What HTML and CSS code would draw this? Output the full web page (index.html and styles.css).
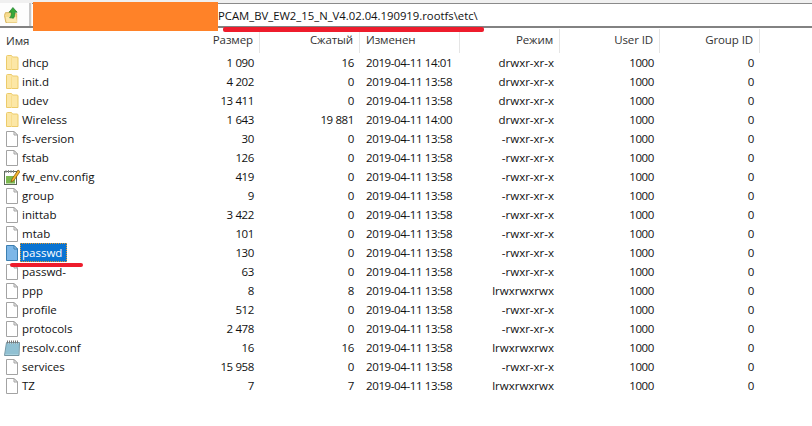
FILE: index.html
```html
<!DOCTYPE html>
<html lang="ru">
<head>
<meta charset="utf-8">
<title>etc</title>
<link rel="stylesheet" href="styles.css">
</head>
<body>
<div class="toolbar">
  <div class="up-btn">
    <svg width="15" height="16" viewBox="0 0 16 17"><path d="M.5 9l1-3h4v-1h2v2h6v9.500H2z" fill="#f6dc8e" stroke="#d6b25a"/><path d="M3 16.500l-1-6h11l1 6z" fill="#fbe9b0"/><path d="M9.500.5l4.500 5h-2.500c0 3 0 4.500-1.500 6.500-1.500-.5-3-.5-4-.5 1.500-1.500 2-3.500 2-6H5.500z" fill="#36a93a" stroke="#1c7a2a" stroke-width=".7"/></svg>
  </div>
  <div class="path-box"><span class="path-text">PCAM_BV_EW2_15_N_V4.02.04.190919.rootfs\etc\</span></div>
</div>
<div class="redact"></div>
<div class="mark mark-path"></div>
<div class="mark mark-file"></div>
<div class="head row">
  <div class="name">Имя</div><div class="num sep">Размер</div><div class="num sep">Сжатый</div><div class="date sep">Изменен</div><div class="num sep">Режим</div><div class="num sep">User ID</div><div class="num sep">Group ID</div>
</div>
<div class="list">
  <div class="row"><div class="name"><svg class="ico"><use href="#folder"/></svg><span class="label">dhcp</span></div><div class="num fig">1 090</div><div class="num fig">16</div><div class="date fig">2019-04-11 14:01</div><div class="num">drwxr-xr-x</div><div class="num fig">1000</div><div class="num fig">0</div></div>
  <div class="row"><div class="name"><svg class="ico"><use href="#folder"/></svg><span class="label">init.d</span></div><div class="num fig">4 202</div><div class="num fig">0</div><div class="date fig">2019-04-11 13:58</div><div class="num">drwxr-xr-x</div><div class="num fig">1000</div><div class="num fig">0</div></div>
  <div class="row"><div class="name"><svg class="ico"><use href="#folder"/></svg><span class="label">udev</span></div><div class="num fig">13 411</div><div class="num fig">0</div><div class="date fig">2019-04-11 13:58</div><div class="num">drwxr-xr-x</div><div class="num fig">1000</div><div class="num fig">0</div></div>
  <div class="row"><div class="name"><svg class="ico"><use href="#folder"/></svg><span class="label">Wireless</span></div><div class="num fig">1 643</div><div class="num fig">19 881</div><div class="date fig">2019-04-11 14:00</div><div class="num">drwxr-xr-x</div><div class="num fig">1000</div><div class="num fig">0</div></div>
  <div class="row"><div class="name"><svg class="ico"><use href="#file"/></svg><span class="label">fs-version</span></div><div class="num fig">30</div><div class="num fig">0</div><div class="date fig">2019-04-11 13:58</div><div class="num">-rwxr-xr-x</div><div class="num fig">1000</div><div class="num fig">0</div></div>
  <div class="row"><div class="name"><svg class="ico"><use href="#file"/></svg><span class="label">fstab</span></div><div class="num fig">126</div><div class="num fig">0</div><div class="date fig">2019-04-11 13:58</div><div class="num">-rwxr-xr-x</div><div class="num fig">1000</div><div class="num fig">0</div></div>
  <div class="row"><div class="name"><svg class="ico"><use href="#config"/></svg><span class="label">fw_env.config</span></div><div class="num fig">419</div><div class="num fig">0</div><div class="date fig">2019-04-11 13:58</div><div class="num">-rwxr-xr-x</div><div class="num fig">1000</div><div class="num fig">0</div></div>
  <div class="row"><div class="name"><svg class="ico"><use href="#file"/></svg><span class="label">group</span></div><div class="num fig">9</div><div class="num fig">0</div><div class="date fig">2019-04-11 13:58</div><div class="num">-rwxr-xr-x</div><div class="num fig">1000</div><div class="num fig">0</div></div>
  <div class="row"><div class="name"><svg class="ico"><use href="#file"/></svg><span class="label">inittab</span></div><div class="num fig">3 422</div><div class="num fig">0</div><div class="date fig">2019-04-11 13:58</div><div class="num">-rwxr-xr-x</div><div class="num fig">1000</div><div class="num fig">0</div></div>
  <div class="row"><div class="name"><svg class="ico"><use href="#file"/></svg><span class="label">mtab</span></div><div class="num fig">101</div><div class="num fig">0</div><div class="date fig">2019-04-11 13:58</div><div class="num">-rwxr-xr-x</div><div class="num fig">1000</div><div class="num fig">0</div></div>
  <div class="row"><div class="name"><svg class="ico"><use href="#file-sel"/></svg><span class="label selected">passwd</span></div><div class="num fig">130</div><div class="num fig">0</div><div class="date fig">2019-04-11 13:58</div><div class="num">-rwxr-xr-x</div><div class="num fig">1000</div><div class="num fig">0</div></div>
  <div class="row"><div class="name"><svg class="ico"><use href="#file"/></svg><span class="label">passwd-</span></div><div class="num fig">63</div><div class="num fig">0</div><div class="date fig">2019-04-11 13:58</div><div class="num">-rwxr-xr-x</div><div class="num fig">1000</div><div class="num fig">0</div></div>
  <div class="row"><div class="name"><svg class="ico"><use href="#file"/></svg><span class="label">ppp</span></div><div class="num fig">8</div><div class="num fig">8</div><div class="date fig">2019-04-11 13:58</div><div class="num">lrwxrwxrwx</div><div class="num fig">1000</div><div class="num fig">0</div></div>
  <div class="row"><div class="name"><svg class="ico"><use href="#file"/></svg><span class="label">profile</span></div><div class="num fig">512</div><div class="num fig">0</div><div class="date fig">2019-04-11 13:58</div><div class="num">-rwxr-xr-x</div><div class="num fig">1000</div><div class="num fig">0</div></div>
  <div class="row"><div class="name"><svg class="ico"><use href="#file"/></svg><span class="label">protocols</span></div><div class="num fig">2 478</div><div class="num fig">0</div><div class="date fig">2019-04-11 13:58</div><div class="num">-rwxr-xr-x</div><div class="num fig">1000</div><div class="num fig">0</div></div>
  <div class="row"><div class="name"><svg class="ico"><use href="#notepad"/></svg><span class="label">resolv.conf</span></div><div class="num fig">16</div><div class="num fig">16</div><div class="date fig">2019-04-11 13:58</div><div class="num">lrwxrwxrwx</div><div class="num fig">1000</div><div class="num fig">0</div></div>
  <div class="row"><div class="name"><svg class="ico"><use href="#file"/></svg><span class="label">services</span></div><div class="num fig">15 958</div><div class="num fig">0</div><div class="date fig">2019-04-11 13:58</div><div class="num">-rwxr-xr-x</div><div class="num fig">1000</div><div class="num fig">0</div></div>
  <div class="row"><div class="name"><svg class="ico"><use href="#file"/></svg><span class="label">TZ</span></div><div class="num fig">7</div><div class="num fig">7</div><div class="date fig">2019-04-11 13:58</div><div class="num">lrwxrwxrwx</div><div class="num fig">1000</div><div class="num fig">0</div></div>
</div>
<svg class="defs" width="0" height="0">
  <defs>
    <symbol id="folder" viewBox="0 0 16 16"><path d="M2.500 1.500q0-1 1-1h4l1 1.500h4.500q1 0 1 1v11.500h-11.500z" fill="#fce7a6" stroke="#eccb6a"/><path d="M7.500 2.500v12.500" stroke="#f8dc8c"/></symbol>
    <symbol id="file" viewBox="0 0 16 16"><path d="M2.500.5h7.500l3.500 3.500v11.500h-11z" fill="#fff" stroke="#a3a3a3"/><path d="M10 .5v3.500h3.500z" fill="#f0f0f0" stroke="#a3a3a3"/></symbol>
    <symbol id="file-sel" viewBox="0 0 16 16"><path d="M2.500.5h7.500l3.500 3.500v11.500h-11z" fill="#7db7e8" stroke="#3c7fb1"/><path d="M10 .5v3.500h3.500z" fill="#a9d0f0" stroke="#3c7fb1"/></symbol>
    <symbol id="config" viewBox="0 0 16 16"><rect x=".5" y="2.500" width="12" height="13" fill="#fff" stroke="#5f6b5f"/><rect x="2" y="7" width="9" height="7.500" fill="#7cb84f"/><path d="M2 1v3M4.500 1v3M7 1v3M9.500 1v3" stroke="#8a8a8a"/><path d="M7 13l1-3 6-9 2 1.500-6 9z" fill="#f4b62c" stroke="#7a4f0e" stroke-width=".7"/></symbol>
    <symbol id="notepad" viewBox="0 0 16 16"><path d="M2.500 2.500h13l-.5 13h-14.500z" fill="#a7d0de" stroke="#7696a3"/><path d="M2 5h13M2 7h13M1.700 9h13M1.500 11h13M1.300 13h13" stroke="#6fa9c2" stroke-width=".8"/><path d="M3.500.5v3M5.500.5v3M7.500.5v3M9.500.5v3M11.500.5v3M13.500.5v3" stroke="#777"/></symbol>
  </defs>
</svg>
</body>
</html>
```
FILE: styles.css
```css
* { box-sizing: border-box; }
html, body { margin: 0; padding: 0; }
body {
  position: relative;
  width: 812px;
  height: 426px;
  overflow: hidden;
  background: #fff;
  font-family: "Open Sans", "Noto Sans", sans-serif;
  font-size: 11.5px;
  color: #111;
}
.toolbar { display: flex; height: 28px; background: #f0f0f0; border-bottom: 2px solid #828282; padding-top: 3px; }
.up-btn { width: 31px; background: #fdfdfd; border-right: 2px solid #c8c8c8; display: flex; align-items: center; justify-content: center; padding: 1px 6px 0 0; }
.path-box { flex: 1; margin-left: 1px; background: #fff; border-top: 1px solid #8a8a8a; padding: 3px 0 0 186px; font-size: 11.3px; line-height: 17px; white-space: nowrap; }
.path-text { color: #111; }
.redact { position: absolute; left: 33px; top: 2px; width: 185px; height: 29px; background: #ff8228; }
.mark { position: absolute; background: #ee1c2c; border-radius: 2px; }
.mark-path { left: 223px; top: 27px; width: 261px; height: 5px; }
.mark-file { left: 10px; top: 263px; width: 73px; height: 4px; }
.row { display: grid; grid-template-columns: 160px 100px 100px 100px 100px 100px 100px; height: 19px; line-height: 19px; white-space: nowrap; }
.head { height: 24px; margin-top: 1px; color: #333; letter-spacing: -.1px; }
.head > div { height: 24px; line-height: 22px; }
.list { margin-top: 0; }
.name { display: flex; align-items: center; padding-left: 4px; }
.head .name { padding-left: 6px; }
.num { text-align: right; padding-right: 6px; }
.date { padding-left: 6px; }
.fig { letter-spacing: -.38px; }
.sep { border-right: 1px solid #e5e5e5; }
.ico { width: 16px; height: 16px; flex: none; }
.label { margin-left: 2px; height: 19px; line-height: 19px; }
.selected { background: #0a74d2; color: #fff; outline: 1px dotted #e89a2b; outline-offset: -1px; margin-left: 0; padding: 0 5px 0 2px; }
.defs { position: absolute; }
```
